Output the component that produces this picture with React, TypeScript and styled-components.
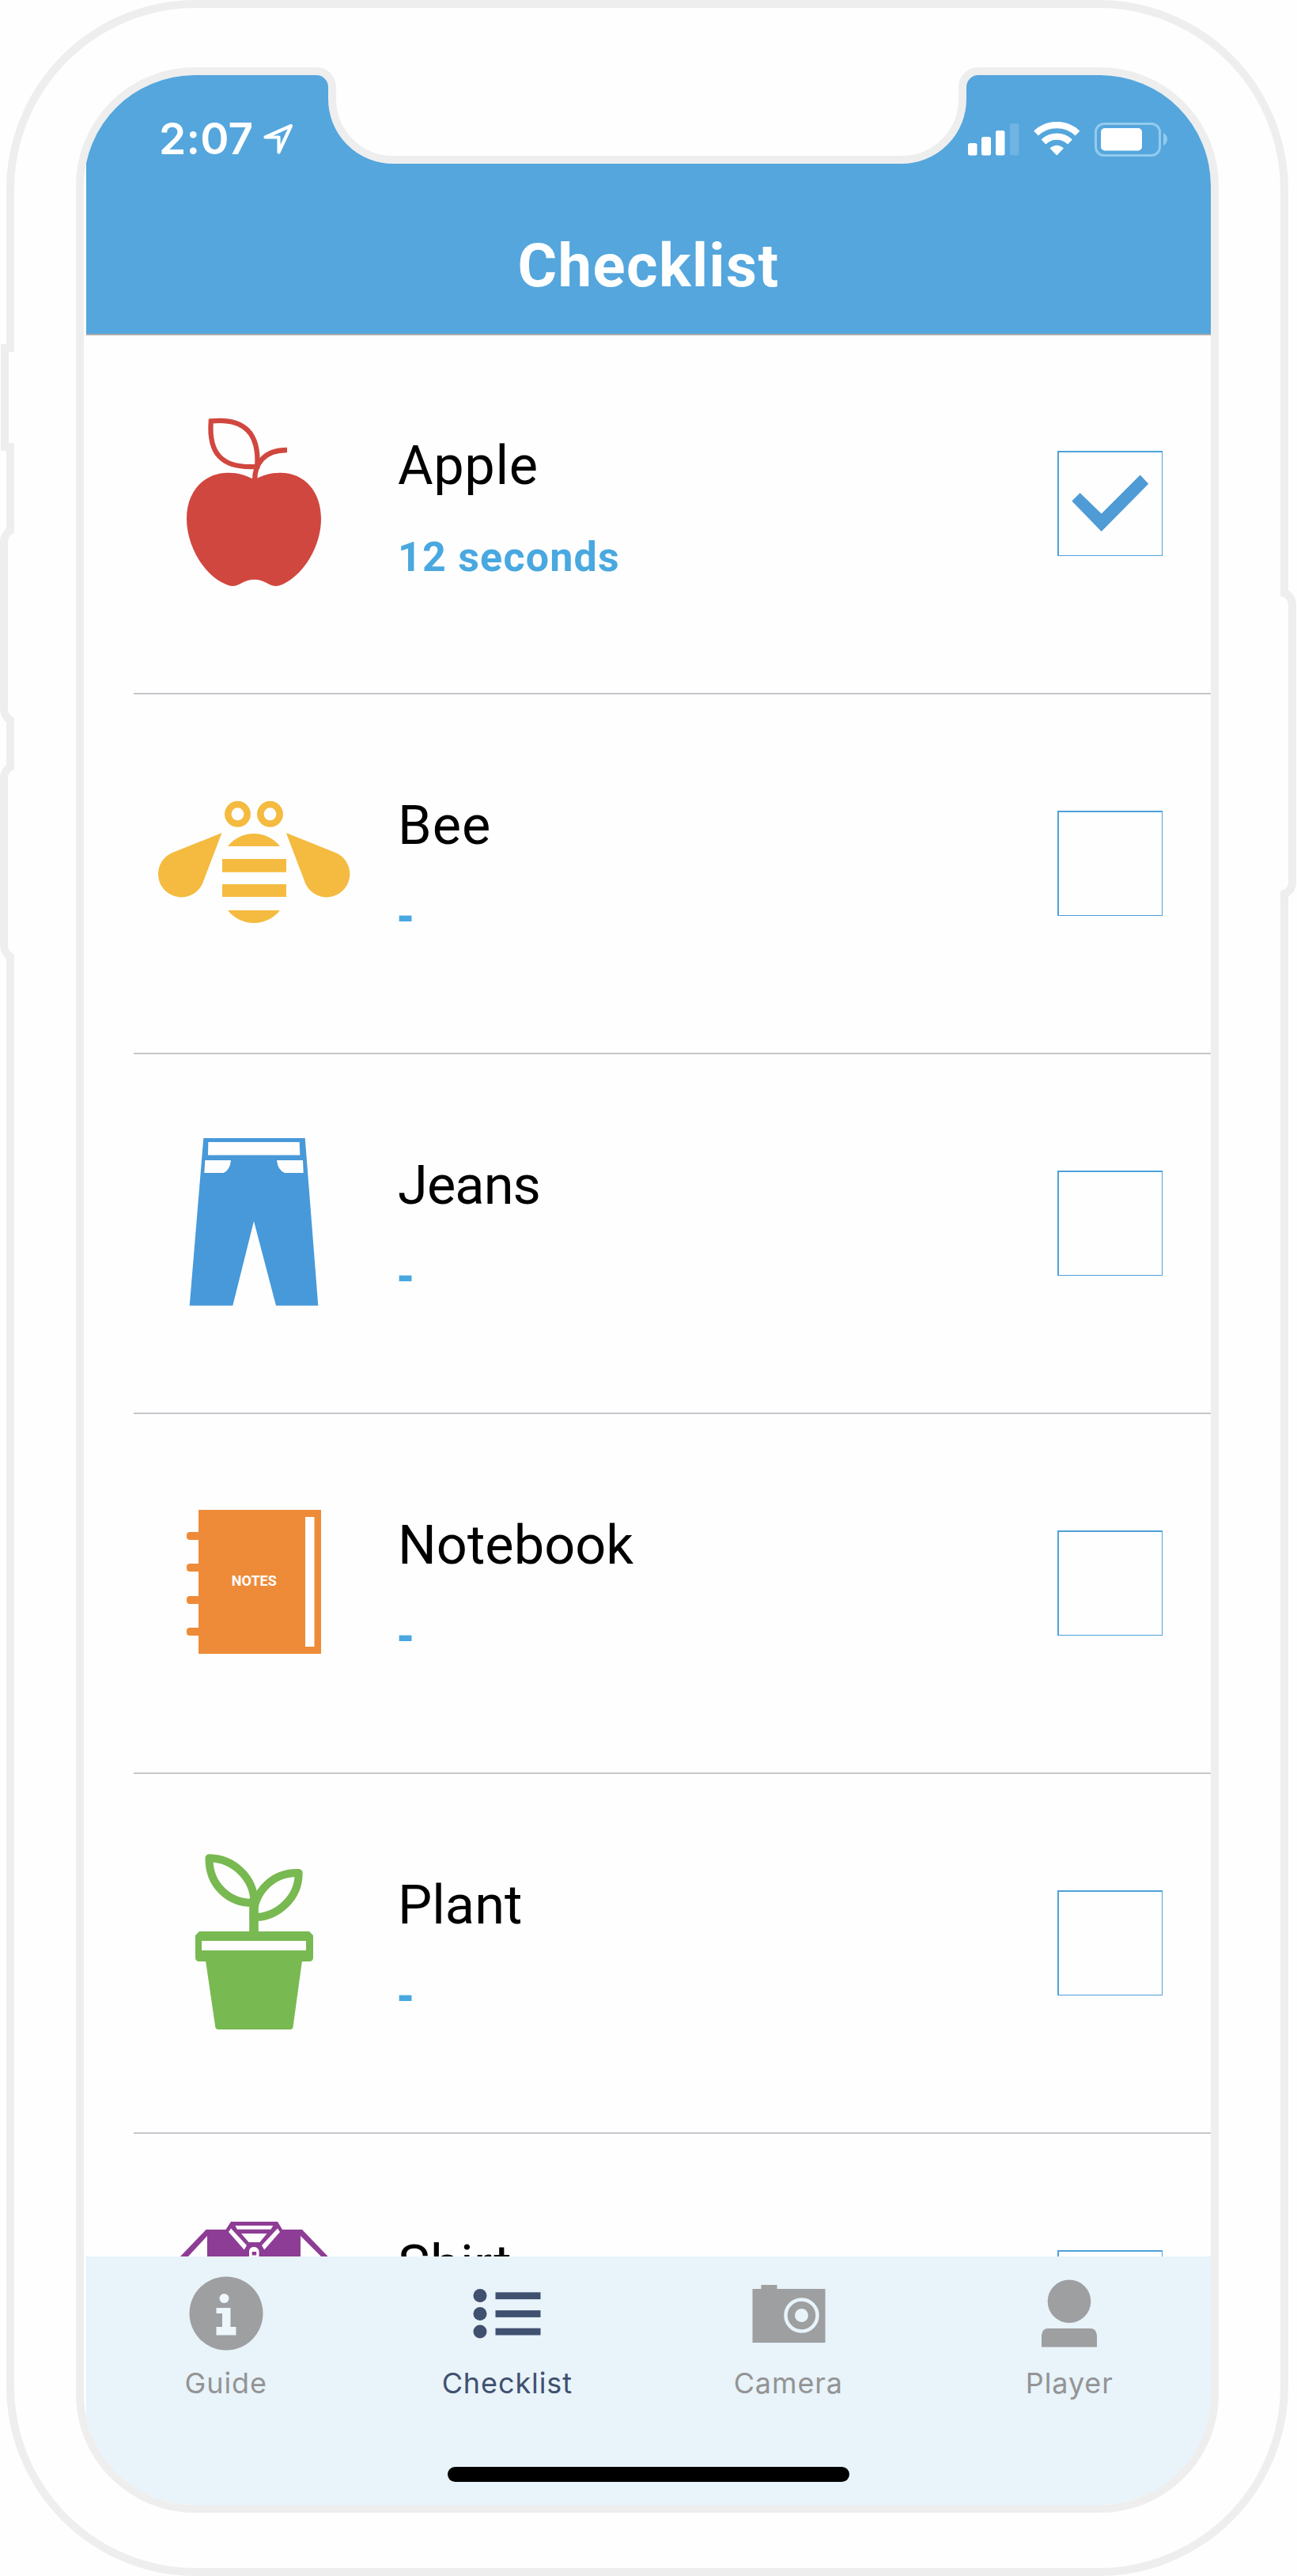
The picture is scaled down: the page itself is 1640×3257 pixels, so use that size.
import React from "react";
import styled, { createGlobalStyle } from "styled-components";

const GlobalStyle = createGlobalStyle`
  *, *::before, *::after { box-sizing: border-box; }
  body { margin: 0; background: #fefefe; }
`;

const bezel = "#eeeeee";
const paper = "#fefefe";
const uiFont = `Roboto, "Noto Sans", sans-serif`;
const systemFont = `Inter, "Liberation Sans", sans-serif`;

const Device = styled.div`
  position: relative;
  width: 1621px;
  height: 3257px;
  margin-left: 8px;
  padding: 75px 0 0 78px;
  border: 10px solid ${bezel};
  border-radius: 240px;
  background: ${paper};
`;

const SideButton = styled.div<{ $side: "left" | "right"; $top: number; $height: number; $square?: boolean }>`
  position: absolute;
  top: ${(p) => p.$top - 10}px;
  height: ${(p) => p.$height}px;
  ${(p) =>
    p.$side === "left"
      ? p.$square
        ? "left: -17px; width: 17px; border-right: 0 !important;"
        : "left: -18px; width: 22px; border-radius: 22px 0 0 22px; border-right: 0 !important; clip-path: inset(0 4px 0 0);"
      : "right: -20px; width: 20px; border-radius: 0 20px 20px 0; border-left: 0 !important;"}
  border: 10px solid ${bezel};
  background: ${paper};
`;

const NotchShape = styled.svg`
  position: absolute;
  left: 377px;
  top: 70px;
  width: 850px;
  height: 130px;
`;

const Screen = styled.main`
  display: flex;
  flex-direction: column;
  width: 1445px;
  height: 3092px;
  padding-left: 3px;
  border: 10px solid ${bezel};
  border-radius: 150px;
  overflow: hidden;
  background: ${paper};
`;

const Header = styled.header`
  flex: none;
  height: 329px;
  border-bottom: 2px solid #adadad;
  background: #54a6dd;
  color: #fff;
`;

const StatusBar = styled.div`
  display: flex;
  justify-content: space-between;
  align-items: center;
  height: 162px;
  padding: 0 54px 0 92px;
`;

const StatusGroup = styled.div<{ $gap: number }>`
  display: flex;
  align-items: center;
  gap: ${(p) => p.$gap}px;
`;

const Clock = styled.span`
  width: 118px;
  margin-top: -2px;
  font: 600 55px/60px ${systemFont};
  letter-spacing: 0.2px;
  white-space: nowrap;
`;

const Title = styled.h1`
  margin: 37px 0 0;
  font: 700 76px/84px ${uiFont};
  letter-spacing: 1.4px;
  text-align: center;
`;

const List = styled.ul`
  flex: 1;
  min-height: 0;
  margin: -1px 0 0;
  padding: 0 0 0 60px;
  list-style: none;
  overflow: hidden;
`;

const Row = styled.li`
  display: flex;
  align-items: center;
  height: 455px;
  padding: 0 61px 26px 30px;
  border-bottom: 2px solid #c6c6cb;
`;

const Art = styled.svg`
  flex: none;
  width: 244px;
  height: 245px;
`;

const RowText = styled.div`
  display: flex;
  flex-direction: column;
  flex: 1;
  align-self: flex-start;
  gap: 46px;
  padding: 126px 0 0 60px;
`;

const ItemName = styled.span<{ $tracking: number }>`
  font: 400 68.5px/80px ${uiFont};
  letter-spacing: ${(p) => p.$tracking}px;
  color: #000;
`;

const ItemTime = styled.span<{ $pending: boolean }>`
  font: ${(p) => (p.$pending ? `700 60px/49px "Noto Sans", sans-serif` : `700 52px/60px ${uiFont}`)};
  letter-spacing: 1.2px;
  color: #49a8e0;
`;

const CheckBox = styled.div`
  flex: none;
  width: 133px;
  height: 133px;
  border: solid #4ea1da;
  border-width: 2px 1px 1px 2px;
  svg { display: block; width: 130px; height: 130px; }
`;

const TabBar = styled.nav`
  flex: none;
  height: 314px;
  background: #e8f3fa;
`;

const Tabs = styled.div`
  display: flex;
  height: 266px;
  margin: 0 1px 0 -1px;
`;

const Tab = styled.div<{ $active?: boolean }>`
  display: flex;
  flex: 1;
  flex-direction: column;
  align-items: center;
  gap: 12px;
  padding-top: 22px;
  color: ${(p) => (p.$active ? "#40506f" : "#9d9fa1")};
  svg { width: 100px; height: 100px; }
`;

const TabLabel = styled.span<{ $active?: boolean }>`
  font: 400 36px/52px ${systemFont};
  letter-spacing: 0.9px;
  color: ${(p) => (p.$active ? "#40506f" : "#949494")};
`;

const HomeIndicator = styled.div`
  width: 508px;
  height: 19px;
  margin: 0 auto;
  border-radius: 10px;
  background: #000;
`;

const Apple = () => (
  <Art viewBox="199 514 244 245" fill="#d0473f">
    <path d="M321.5 606.5C311 601 301 597.7 289 597.7C257 597.7 236 622 236 656C236 689 257 726 283 737.5C291 742 297 742 304 738C310 734.5 316 732.7 321.5 732.7C327 732.7 333 734.5 339 738C346 742 352 742 360 737.5C386 724 406 689 406 656C406 622 386 597.7 354 597.7C342 597.7 332 601 321.5 606.5Z" />
    <g fill="none" stroke="#d0473f" strokeWidth="6.3">
      <path d="M322 608C322 586 334 569 363 569" />
      <path d="M266.8 532.4C309 528 328 548 325.2 589.8C281 593 263.500 574 266.8 532.4Z" />
    </g>
  </Art>
);

const Bee = () => (
  <Art viewBox="199 969 244 245" fill="#f4bb40">
    <g fill="none" stroke="#f4bb40" strokeWidth="8.500">
      <circle cx="300.500" cy="1029.300" r="12.200" />
      <circle cx="341.500" cy="1029.300" r="12.200" />
    </g>
    <path d="M280.500 1053L217 1078.500A29.300 29.300 0 1 0 256.500 1116Z" />
    <path d="M361.800 1053L425.300 1078.500A29.300 29.300 0 1 1 385.800 1116Z" />
    <path d="M288 1070A42 42 0 0 1 354 1070ZM288 1151A42 42 0 0 0 354 1151ZM281 1086H362V1102.700H281ZM281 1118H362V1134H281Z" />
  </Art>
);

const Jeans = () => (
  <Art viewBox="199 1424 244 245" fill="#4799d9">
    <path
      fillRule="evenodd"
      d="M257.300 1439H385.700L402.300 1650.700H349L321 1544L294.300 1650.700H239.700ZM263.300 1444L263 1460.500H379.300L378.700 1444ZM259.300 1467L258.300 1483H282.700Q291 1479 292 1467ZM350 1467Q351 1479 360 1483H383.700L383 1467Z"
    />
  </Art>
);

const Notebook = () => (
  <Art viewBox="199 1879 244 245" fill="#ee8b39">
    <path fillRule="evenodd" d="M251 1909H406V2091H251ZM386 1918H397.500V2082H386Z" />
    {[1937, 1977, 2018, 2058].map((y) => (
      <rect key={y} x="236" y={y} width="24" height="10" rx="4" />
    ))}
    <text x="321.300" y="2005" fill="#fff" fontFamily={uiFont} fontWeight="700" fontSize="18" textAnchor="middle" textLength="57">
      NOTES
    </text>
  </Art>
);

const Plant = () => (
  <Art viewBox="199 2334 244 245" fill="#78b952">
    <path d="M260 2479H382L370.500 2563Q370 2566 367 2566H276Q273 2566 272.300 2563Z" />
    <path
      fillRule="evenodd"
      d="M252 2442H391L396 2447V2475Q396 2480 391 2480H252Q247 2480 247 2475V2447ZM255 2454V2466H387V2454Z"
    />
    <g fill="none" stroke="#78b952" strokeWidth="10" strokeLinejoin="round">
      <path strokeWidth="11.600" d="M321 2400V2444" />
      <path d="M264.500 2349.300C295 2350 321.500 2374 321.500 2406C289 2407 264 2383 264.500 2349.300Z" />
      <path d="M377.700 2368C345 2367 320 2392 320.500 2424.500C352 2424 378 2399 377.700 2368Z" />
    </g>
  </Art>
);

const Shirt = () => (
  <Art viewBox="199 2789 244 245" fill="#8d3d95">
    <path d="M292 2809H351L357 2819H382L414.700 2853L430 2870L400 2890L380 2860V3010H262V2860L242 2890L212 2870L228 2853L260.600 2819H285.500Z" />
    <g fill={paper}>
      <path d="M262 2827L238 2853L230 2862L262 2866ZM380 2827L406 2853L414 2862L380 2866Z" />
      <path d="M297.400 2814H345.300L342.500 2818.800H300Z" />
      <path d="M305 2824H337.500L328.500 2835H314.500Z" />
      <path d="M289 2822L292 2817.500L312 2839L308.800 2844.500ZM354 2822L351 2817.500L331 2839L334.200 2844.500Z" />
      <path d="M315 3000V2846Q316 2841 321 2841Q326 2841 327.500 2846V3000Z" />
    </g>
    <rect x="318.700" y="2847" width="5.500" height="4.500" />
  </Art>
);

const items = [
  { name: "Apple", time: "12 seconds", done: true, tracking: 0.6, Icon: Apple },
  { name: "Bee", time: "-", done: false, tracking: 1, Icon: Bee },
  { name: "Jeans", time: "-", done: false, tracking: -0.9, Icon: Jeans },
  { name: "Notebook", time: "-", done: false, tracking: 0, Icon: Notebook },
  { name: "Plant", time: "-", done: false, tracking: 0, Icon: Plant },
  { name: "Shirt", time: "-", done: false, tracking: 0.3, Icon: Shirt },
];

const tabs = [
  {
    label: "Guide",
    icon: (
      <svg viewBox="0 0 100 100" fill="currentColor">
        <circle cx="50" cy="50" r="46.500" />
        <g fill="#eef7fc">
          <circle cx="47.500" cy="31" r="6" />
          <path d="M37.500 43H55.500V67H62.500V77.500H37.500V67H45V50H37.500Z" />
        </g>
      </svg>
    ),
  },
  {
    label: "Checklist",
    active: true,
    icon: (
      <svg viewBox="0 0 100 100" fill="currentColor">
        {[27.6, 50.4, 73].map((y) => (
          <React.Fragment key={y}>
            <circle cx="16" cy={y} r="8.500" />
            <rect x="35.500" y={y - 4.3} width="57" height="8.800" />
          </React.Fragment>
        ))}
      </svg>
    ),
  },
  {
    label: "Camera",
    icon: (
      <svg viewBox="0 0 100 100" fill="currentColor">
        <path d="M4.500 19H15.500V14H35.500V19H96.500V87H4.500Z" />
        <circle cx="66.500" cy="52.500" r="20" fill="none" stroke="#e8f3fa" strokeWidth="4.500" />
        <circle cx="66.500" cy="52.500" r="8.500" fill="#e8f3fa" />
      </svg>
    ),
  },
  {
    label: "Player",
    icon: (
      <svg viewBox="0 0 100 100" fill="currentColor">
        <circle cx="50" cy="34.700" r="27.300" />
        <path d="M15 92.500V78Q16 69 23 69H77Q84 69 85 78V92.500Z" />
      </svg>
    ),
  },
];

export default function App() {
  return (
    <>
      <GlobalStyle />
      <Device>
        <Screen>
          <Header>
            <StatusBar>
              <StatusGroup $gap={13}>
                <Clock>2:07</Clock>
                <svg width="40" height="42" viewBox="0 0 40 42" fill="none" stroke="#fff" strokeWidth="4.200" strokeLinejoin="round">
                  <path d="M36 4L3.500 18.500H20.500V37.500Z" />
                </svg>
              </StatusGroup>
              <StatusGroup $gap={18}>
                <svg width="66" height="44" viewBox="1223 154 66 44" fill="#fff">
                  <rect x="1224" y="181" width="11.500" height="15.500" rx="2.500" />
                  <rect x="1241" y="173" width="12" height="23.500" rx="2.500" />
                  <rect x="1259" y="165" width="11.500" height="31.500" rx="2.500" />
                  <rect x="1277" y="156" width="11.500" height="40.500" rx="2.500" opacity="0.160" />
                </svg>
                <svg width="58" height="44" viewBox="1307 154 58 44">
                  <g fill="none" stroke="#fff" strokeWidth="8.300">
                    <path d="M1310 168.500A38 38 0 0 1 1362.500 168.500" />
                    <path d="M1319.500 179.500A24 24 0 0 1 1353 179.500" />
                  </g>
                  <path fill="#fff" d="M1327.500 187.500Q1336.200 180 1345 187.500L1336.200 196.500Z" />
                </svg>
                <svg width="94" height="44" viewBox="1383 154 94 44" fill="#fff">
                  <rect x="1385.500" y="156.500" width="81" height="40" rx="10.500" fill="none" stroke="#93cbed" strokeWidth="3" />
                  <rect x="1392" y="162" width="52" height="28.500" rx="5" />
                  <path fill="#93cbed" d="M1471 168Q1476 171 1476 176Q1476 181 1471 184Z" />
                </svg>
              </StatusGroup>
            </StatusBar>
            <Title>Checklist</Title>
          </Header>
          <List>
            {items.map(({ name, time, done, tracking, Icon }) => (
              <Row key={name}>
                <Icon />
                <RowText>
                  <ItemName $tracking={tracking}>{name}</ItemName>
                  <ItemTime $pending={!done}>{time}</ItemTime>
                </RowText>
                <CheckBox>
                  {done && (
                    <svg viewBox="2 2 130 130" fill="#4e9bd5">
                      <path d="M18.300 63.600L28.700 53.300L55.700 79.600L104.700 30.600L115.200 41.800L55.700 102Z" />
                    </svg>
                  )}
                </CheckBox>
              </Row>
            ))}
          </List>
          <TabBar>
            <Tabs>
              {tabs.map((t) => (
                <Tab key={t.label} $active={t.active}>
                  {t.icon}
                  <TabLabel $active={t.active}>{t.label}</TabLabel>
                </Tab>
              ))}
            </Tabs>
            <HomeIndicator />
          </TabBar>
        </Screen>
        <NotchShape viewBox="395 80 850 130">
          <path
            fill={paper}
            d="M400 84V90A20 20 0 0 1 420 110V125A77 77 0 0 0 497 202H1140A77 77 0 0 0 1217 125V110A20 20 0 0 1 1237 90V84Z"
          />
          <path
            fill="none"
            stroke={bezel}
            strokeWidth="10"
            d="M400 90A20 20 0 0 1 420 110V125A77 77 0 0 0 497 202H1140A77 77 0 0 0 1217 125V110A20 20 0 0 1 1237 90"
          />
        </NotchShape>
        <SideButton $side="left" $top={435} $height={135} $square />
        <SideButton $side="left" $top={663} $height={255} />
        <SideButton $side="left" $top={962} $height={255} />
        <SideButton $side="right" $top={743.5} $height={392} />
      </Device>
    </>
  );
}
